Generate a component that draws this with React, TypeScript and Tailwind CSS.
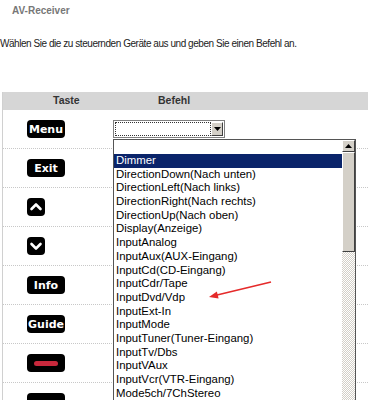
import React from 'react';

const OPTIONS = [
  'Dimmer',
  'DirectionDown(Nach unten)',
  'DirectionLeft(Nach links)',
  'DirectionRight(Nach rechts)',
  'DirectionUp(Nach oben)',
  'Display(Anzeige)',
  'InputAnalog',
  'InputAux(AUX-Eingang)',
  'InputCd(CD-Eingang)',
  'InputCdr/Tape',
  'InputDvd/Vdp',
  'InputExt-In',
  'InputMode',
  'InputTuner(Tuner-Eingang)',
  'InputTv/Dbs',
  'InputVAux',
  'InputVcr(VTR-Eingang)',
  'Mode5ch/7ChStereo',
];

function LabelKey({ label }: { label: string }) {
  return (
    <div className="w-[38px] h-[18px] rounded-[4px] bg-black text-white flex items-center justify-center text-[11px] font-bold font-['DejaVu_Sans',sans-serif] leading-none">
      {label}
    </div>
  );
}

function ChevronKey({ dir }: { dir: 'up' | 'down' }) {
  return (
    <svg width="18" height="18" viewBox="0 0 18 18">
      <rect x="0" y="0" width="18" height="18" rx="4" fill="#000" />
      <polyline
        points={dir === 'up' ? '4.5,11 9,6.5 13.5,11' : '4.5,7 9,11.5 13.5,7'}
        fill="none"
        stroke="#fff"
        strokeWidth="2.6"
        strokeLinecap="round"
        strokeLinejoin="round"
      />
    </svg>
  );
}

function RedKey() {
  return (
    <div className="w-[38px] h-[18px] rounded-[4px] bg-black flex items-center justify-center">
      <div className="w-[24px] h-[5px] rounded-full bg-[#c8283c]" />
    </div>
  );
}

const ROWS: React.ReactNode[] = [
  <LabelKey label="Menu" />,
  <LabelKey label="Exit" />,
  <ChevronKey dir="up" />,
  <ChevronKey dir="down" />,
  <LabelKey label="Info" />,
  <LabelKey label="Guide" />,
  <RedKey />,
  <div className="w-[38px] h-[18px] rounded-[4px] bg-black" />,
];

export default function App() {
  return (
    <div className="relative w-[368px] h-[400px] overflow-hidden bg-white text-black font-['Liberation_Sans',Arial,sans-serif]">
      <div className="pl-3 pt-[5px] text-[10px] leading-[12px] font-bold text-[#777]">AV-Receiver</div>
      <p className="mt-[21px] text-[10px] leading-[12px] tracking-[-0.45px] text-[#222]">
        Wählen Sie die zu steuernden Geräte aus und geben Sie einen Befehl an.
      </p>

      {/* Tabelle */}
      <div className="mt-[42px] ml-[2px] border-l border-[#d0d0d0]">
        <div className="h-[18px] bg-[#d6d6d6] flex items-center text-[10.5px] font-bold text-[#333]">
          <span className="ml-[50px] w-[105px]">Taste</span>
          <span>Befehl</span>
        </div>
        {ROWS.map((key, i) => (
          <div key={i} className="h-[39px] flex items-center border-b border-dotted border-[#c8c8c8]">
            <div className="w-[110px] pl-[24px] flex items-center">{key}</div>
            {i === 0 && (
              <div className="w-[112px] h-[18px] border border-[#7f7f7f] bg-white flex p-[1px]">
                <div className="flex-1 border border-dotted border-[#333]" />
                <div className="w-[12px] bg-[#d4d0c8] border-t border-l border-white border-r border-b border-r-[#404040] border-b-[#404040] flex items-center justify-center">
                  <svg width="7" height="4" viewBox="0 0 7 4">
                    <polygon points="0,0 7,0 3.5,4" fill="#000" />
                  </svg>
                </div>
              </div>
            )}
          </div>
        ))}
      </div>

      {/* aufgeklappte Liste */}
      <div className="absolute left-[113px] top-[139px] w-[243px] h-[280px] border border-[#555] bg-white flex">
        <div className="flex-1 flex flex-col text-[11.4px]">
          <div className="h-[14px]" />
          {OPTIONS.map((o, i) => (
            <div
              key={o}
              className={`h-[13.7px] leading-[13.7px] pl-[2px] whitespace-nowrap ${
                i === 0 ? 'bg-[#0a246a] text-white' : ''
              }`}
            >
              {o}
            </div>
          ))}
        </div>
        <div className="w-[13px] flex flex-col bg-[repeating-conic-gradient(#d4d0c8_0%_25%,#ffffff_0%_50%)] bg-[length:2px_2px]">
          <div className="h-[12px] bg-[#d4d0c8] border-t border-l border-white border-r border-b border-r-[#404040] border-b-[#404040] flex items-center justify-center">
            <svg width="7" height="4" viewBox="0 0 7 4">
              <polygon points="0,4 7,4 3.5,0" fill="#000" />
            </svg>
          </div>
          <div className="h-[100px] bg-[#d4d0c8] border-t border-l border-white border-r border-b border-r-[#404040] border-b-[#404040]" />
        </div>
      </div>

      {/* roter Pfeil */}
      <svg className="absolute left-0 top-0 pointer-events-none" width="368" height="400" viewBox="0 0 368 400">
        <line x1="271" y1="282" x2="216" y2="295.2" stroke="#e52a2a" strokeWidth="1.6" />
        <polygon points="209,297 218.6,298.4 216.9,291.4" fill="#e52a2a" />
      </svg>
    </div>
  );
}
